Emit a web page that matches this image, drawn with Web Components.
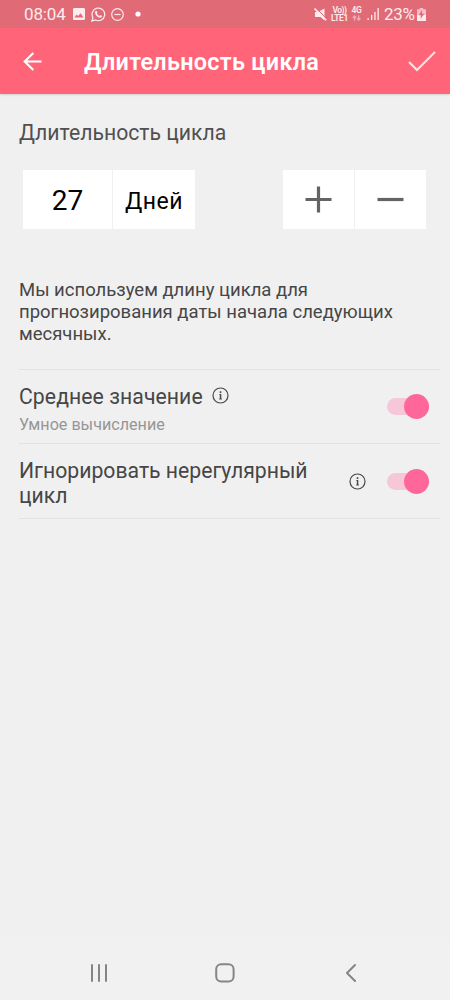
<!DOCTYPE html>
<html lang="ru">
<head>
<meta charset="utf-8">
<title>Длительность цикла</title>
<style>
html,body{margin:0;height:100%;background:#f0f0f0;font-family:Roboto,"Noto Sans",sans-serif;overflow:hidden}
</style>
</head>
<body>
<cycle-screen></cycle-screen>
<script>
const define = (name, html) => customElements.define(name, class extends HTMLElement {
  constructor() {
    super();
    this.attachShadow({mode: 'open'}).innerHTML = '<style>:host{box-sizing:border-box}svg{display:block;flex:none}</style>' + html;
  }
});

define('status-bar', `<style>
:host{display:flex;height:28px;align-items:center;background:#e16a77;color:#fdebed;padding:0 24px;font-size:17px;line-height:28px}
span{display:block;white-space:nowrap}
.clock{width:49px;letter-spacing:-.15px}
.gap{flex:1}
.net{display:flex;flex-direction:column;font-size:8.500px;line-height:8px;font-weight:600;text-align:center}
.pct{font-size:17px;width:33px;letter-spacing:-.35px;margin-left:5px}
</style>
<span class="clock">08:04</span>
<svg width="12" height="12" viewBox="0 0 12 12"><path fill="#fdebed" fill-rule="evenodd" d="M1.3 0h9.4Q12 0 12 1.3v9.4q0 1.3-1.3 1.3H1.3Q0 12 0 10.7V1.3Q0 0 1.3 0zM1.500 9.500h9L7.500 5.200 5.200 8 3.600 6.400z"/></svg>
<svg style="margin-left:6px" width="15" height="15" viewBox="0 0 15 15"><path d="M.9 14.1l1-3.6A6.3 6.3 0 1 1 4.500 13z" fill="none" stroke="#fdebed" stroke-width="1.250"/><path fill="#fdebed" d="M4.600 4.100l1-.3.9 1.900-.6.9q.8 1.700 2.500 2.300l.8-.8 1.800.9q.1 1.800-1.800 1.800Q5 10.200 4 6q0-1.300.6-1.900z"/></svg>
<svg style="margin-left:5px" width="13" height="13" viewBox="0 0 13 13" fill="none" stroke="#fdebed" stroke-width="1.200"><circle cx="6.500" cy="6.500" r="5.800"/><path d="M3.500 6.500h6"/></svg>
<svg style="margin-left:11px" width="6" height="6"><circle cx="3" cy="3" r="2.600" fill="#fff"/></svg>
<div class="gap"></div>
<svg width="13" height="13" viewBox="0 0 13 13"><path fill="#fdebed" d="M1 4h3l6.500-3.500v12L6.500 9H1z"/><path d="M1.800-.2L13 11" stroke="#e16a77" stroke-width="1"/><path d="M.5.500l11.800 11.800" stroke="#fdebed" stroke-width="1.600"/></svg>
<div class="net" style="width:17px;margin-left:4px;white-space:nowrap"><span style="letter-spacing:-.5px">Vo))</span><span style="letter-spacing:-.4px">LTE1</span></div>
<div class="net" style="width:11px;margin-left:3px"><span style="letter-spacing:-.3px">4G</span><svg width="11" height="8" viewBox="0 0 11 8" fill="none" stroke="#eeacb4" stroke-width="1.400"><path d="M3.500 6.500V2M1.800 3.700l1.700-1.800 1.700 1.800M7.700 1.500V6M6 4.300l1.700 1.800 1.700-1.800"/></svg></div>
<svg style="margin-left:5px" width="12" height="12" viewBox="0 0 12 12" fill="#fdebed"><path d="M.5 10h1.300v2H.5zM4 7h1.300v5H4zM7.300 4h1.300v8H7.300zM10.500 0h1.300v12h-1.300z"/></svg>
<span class="pct">23%</span>
<svg width="9" height="13" viewBox="0 0 9 13"><path fill="#f3bec4" d="M2.800 0h3.400v1.300H9v6.500H0V1.300h2.800z"/><path fill="#fdebed" d="M0 7h9v6H0z"/><path fill="#e16a77" d="M5 2L1.700 7.300h2.200L3.500 11 7.300 5.800H5z"/></svg>
`);

define('app-bar', `<style>
:host{display:flex;height:66px;align-items:center;background:#ff6478;padding:0 14px 0 23px;color:#fff;box-shadow:0 1px 2px #0002}
h1{flex:1;margin:2px 0 0 42px;font-size:23.400px;font-weight:600;line-height:30px;letter-spacing:.3px;white-space:nowrap}
</style>
<svg width="19" height="19" viewBox="0 0 19 19" fill="none" stroke="#fff" stroke-width="2.100"><path d="M18.500 9.500H2M10.300 1L1.700 9.500l8.600 8.500"/></svg>
<h1><slot></slot></h1>
<svg width="28" height="21" viewBox="0 0 28 21" fill="none" stroke="#ffe0e3" stroke-width="2.200"><path d="M1 11l8 8L27 1"/></svg>
`);

define('value-cell', `<style>
:host{display:flex;align-items:center;justify-content:center;height:59px;background:#fff;color:#000}
</style><slot></slot>`);

define('cycle-stepper', `<style>
:host{display:flex;justify-content:space-between;padding:0 24px 0 23px}
.g{display:flex;gap:1px}
.n{width:89px;font-size:28px;padding-top:2px}
.d{width:82px;font-size:23px;padding-top:3px;letter-spacing:.5px}
.b{width:71px}
</style>
<div class="g"><value-cell class="n">27</value-cell><value-cell class="d">Дней</value-cell></div>
<div class="g">
<value-cell class="b"><svg width="27" height="27" viewBox="0 0 27 27" stroke="#646464" stroke-width="3.200"><path d="M.5 13.500h26M13.500.500v26"/></svg></value-cell>
<value-cell class="b"><svg width="27" height="27" viewBox="0 0 27 27" stroke="#646464" stroke-width="3.200"><path d="M.5 13.500h26"/></svg></value-cell>
</div>`);

define('info-icon', `<style>:host{display:block;width:17px;height:17px}</style>
<svg width="17" height="17" viewBox="0 0 17 17"><circle cx="8.500" cy="8.500" r="7.500" fill="none" stroke="#484848" stroke-width="1.200"/><path fill="#484848" d="M7.700 4.300h1.600v1.600H7.700zM7.300 6.900h2v4.700h.6v.9H7.200v-.9h.6V7.800h-.5z"/></svg>`);

define('toggle-switch', `<style>
:host{display:block;width:42px}
.track{display:flex;height:17px;border-radius:8.500px;background:#f6c7d8;align-items:center;justify-content:flex-end}
i{width:25px;height:25px;border-radius:50%;background:#ff6699}
</style><div class="track"><i></i></div>`);

define('setting-row', `<style>
:host{display:flex;align-items:center;margin:0 10px 0 19px;padding-right:11px;border-bottom:1px solid #e2e2e2;color:#464646}
.t{flex:1;align-self:flex-start;font-size:21.200px;line-height:25px;padding-top:14px}
.s{font-size:16.150px;line-height:20px;padding-top:6px;color:#969696}
toggle-switch{margin:0 0 0 21px}
::slotted(info-icon){margin-top:1px}
</style><div class="t"><slot></slot><div class="s"><slot name="sub"></slot></div></div><slot name="info"></slot><toggle-switch></toggle-switch>`);

define('nav-bar', `<style>
:host{display:flex;height:57px;align-items:center;justify-content:space-between;padding:2px 93px 0 90px;background:#f1f1f1}
</style>
<svg width="18" height="18" viewBox="0 0 18 18" stroke="#858585" stroke-width="2" stroke-linecap="round"><path d="M2 1v16M9 1v16M16 1v16"/></svg>
<svg style="margin-right:4px" width="20" height="20" viewBox="0 0 20 20" fill="none" stroke="#858585" stroke-width="2"><rect x="1.200" y="1.200" width="17.400" height="17.400" rx="5"/></svg>
<svg width="12" height="18" viewBox="0 0 12 18" fill="none" stroke="#858585" stroke-width="2" stroke-linecap="round" stroke-linejoin="round"><path d="M10 1L2 9l8 8"/></svg>`);

define('cycle-screen', `<style>
:host{display:flex;flex-direction:column;width:450px;height:1000px;background:#f0f0f0}
main{flex:1;display:flex;flex-direction:column}
h2{margin:26px 0 0 19px;font-size:21.200px;font-weight:400;line-height:26px;color:#505050}
cycle-stepper{margin-top:24px}
p{margin:50px 0 0 19px;width:400px;font-size:18.500px;line-height:22px;color:#464646}
.line{height:1px;background:#e2e2e2;margin:24px 10px 0 19px}
.one{height:74px}.two{height:75px}
.inl{display:flex;align-items:center;gap:9px;letter-spacing:.07px}
.inl info-icon{margin-top:-2px}
</style>
<status-bar></status-bar>
<app-bar>Длительность цикла</app-bar>
<main>
<h2>Длительность цикла</h2>
<cycle-stepper></cycle-stepper>
<p>Мы используем длину цикла для<br>прогнозирования даты начала следующих<br>месячных.</p>
<div class="line"></div>
<setting-row class="one"><div class="inl">Среднее значение<info-icon></info-icon></div><span slot="sub">Умное вычисление</span></setting-row>
<setting-row class="two">Игнорировать нерегулярный<br>цикл<info-icon slot="info"></info-icon></setting-row>
</main>
<nav-bar></nav-bar>`);
</script>
</body>
</html>
